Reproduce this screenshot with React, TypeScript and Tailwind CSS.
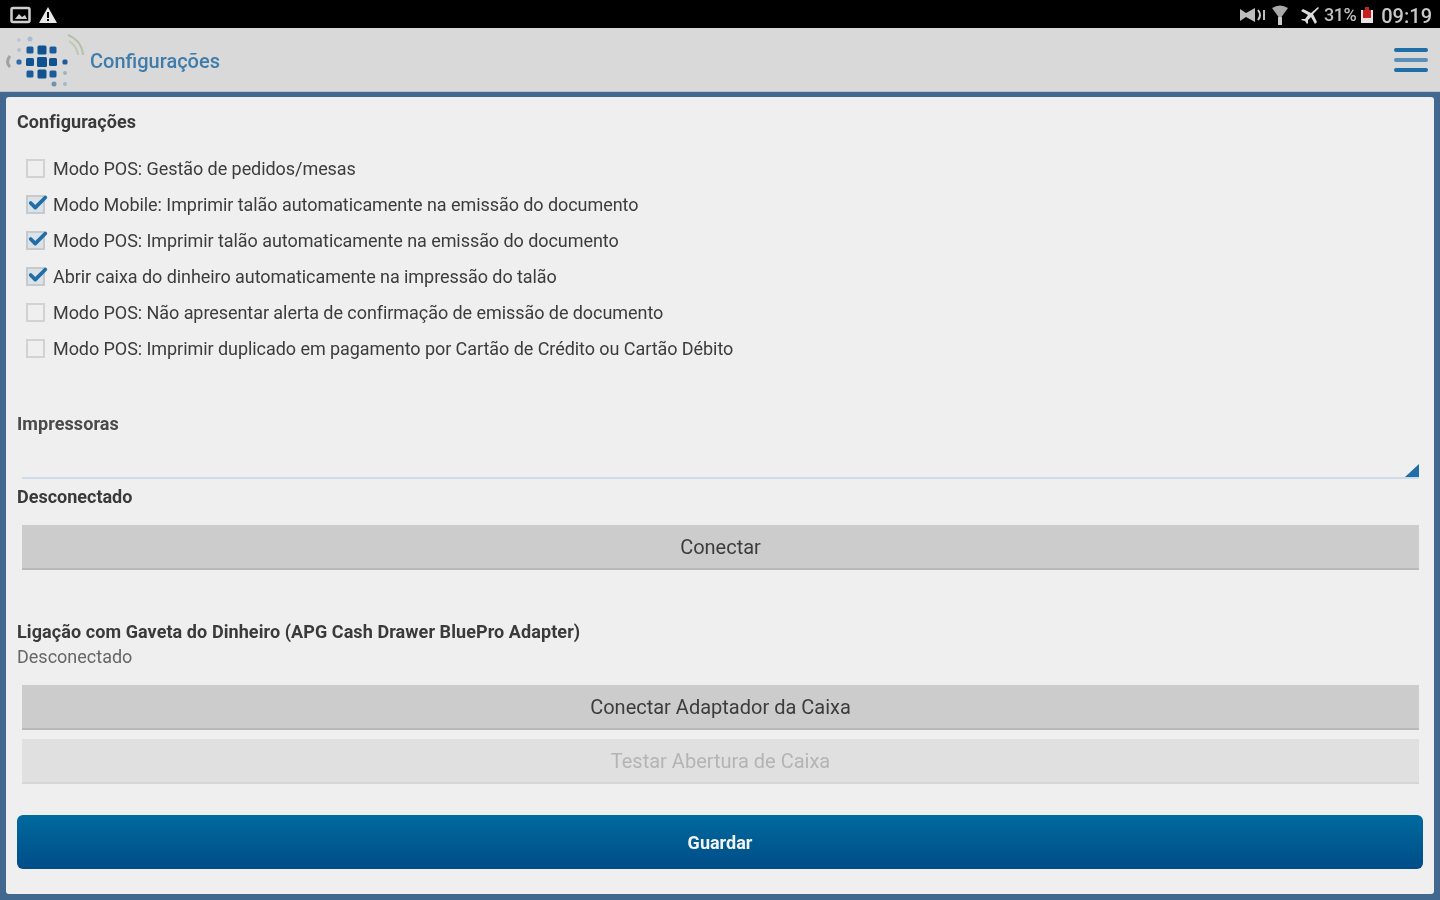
import { Check } from 'lucide-react';

const options = [
  { label: 'Modo POS: Gestão de pedidos/mesas', checked: false },
  { label: 'Modo Mobile: Imprimir talão automaticamente na emissão do documento', checked: true },
  { label: 'Modo POS: Imprimir talão automaticamente na emissão do documento', checked: true },
  { label: 'Abrir caixa do dinheiro automaticamente na impressão do talão', checked: true },
  { label: 'Modo POS: Não apresentar alerta de confirmação de emissão de documento', checked: false },
  { label: 'Modo POS: Imprimir duplicado em pagamento por Cartão de Crédito ou Cartão Débito', checked: false },
];

function Logo() {
  const dots = [
    [30, 50, 7, '#1b5b9c'], [42, 50, 9, '#0f528f'], [53, 50, 7, '#1b5b9c'],
    [19, 62, 5, '#2e6ca8'], [30, 62, 8, '#0f528f'], [42, 62, 10, '#0f528f'], [53, 62, 8, '#0f528f'], [65, 62, 5, '#1b5b9c'],
    [30, 74, 7, '#1b5b9c'], [42, 74, 9, '#0f528f'], [53, 74, 7, '#1b5b9c'],
  ] as const;
  return (
    <svg width="84" height="58" viewBox="4 31 84 58" className="shrink-0">
      {dots.map(([x, y, s, c], i) => (
        <rect key={i} x={x - s / 2} y={y - s / 2} width={s} height={s} rx="1.5" fill={c} />
      ))}
      <circle cx="19" cy="40" r="2" fill="#c0c8d0" />
      <circle cx="30" cy="39" r="2.5" fill="#a9bccd" />
      <circle cx="19" cy="50" r="2" fill="#b4c1cc" />
      <circle cx="65" cy="73" r="2" fill="#9db2c6" />
      <circle cx="54" cy="84" r="2.5" fill="#6f93b5" />
      <circle cx="65" cy="84" r="2" fill="#a5b8c8" />
      <path d="M10 56 Q5 62 10 67" fill="none" stroke="#a0a4a0" strokeWidth="3" />
      <path d="M68 35 Q82 41 83 55" fill="none" stroke="#b3c2a8" strokeWidth="2" />
      <path d="M69 41 Q77 46 78 55" fill="none" stroke="#bcc9b0" strokeWidth="2" />
    </svg>
  );
}

function StatusBar() {
  return (
    <div className="h-[28px] bg-black flex items-center justify-between pl-[10px] pr-[8px] pt-[2px] text-[#d2d2d2]">
      <div className="flex items-center gap-[6px]">
        <svg width="22" height="18" viewBox="0 0 22 18">
          <rect x="1.5" y="2" width="18" height="14" rx="1.5" fill="none" stroke="#cfcfcf" strokeWidth="2.5" />
          <path d="M5 13 L9 8 L12 11 L15 9 L17 13 Z" fill="#cfcfcf" />
        </svg>
        <svg width="20" height="18" viewBox="0 0 20 18">
          <path d="M10 1 L19 17 L1 17 Z" fill="#e8e8e8" />
          <rect x="9" y="6" width="2" height="6" fill="#000" />
          <rect x="9" y="13" width="2" height="2" fill="#000" />
        </svg>
      </div>
      <div className="flex items-center">
        <svg width="28" height="18" viewBox="0 0 28 18">
          <path d="M1 3 L7 7 L16 2 L16 16 L7 11 L1 15 Z" fill="#bdbdbd" />
          <path d="M19 4 Q23 9 19 14" fill="none" stroke="#cfcfcf" strokeWidth="2" />
          <rect x="24" y="4" width="2" height="10" fill="#bdbdbd" />
        </svg>
        <svg width="20" height="22" viewBox="0 0 20 22" className="ml-[3px]">
          <path d="M2 4 Q10 -1 18 4 L10 15 Z" fill="#a9a9a9" />
          <rect x="8" y="13" width="4" height="8" fill="#c9c9c9" />
        </svg>
        <svg width="20" height="20" viewBox="0 0 20 20" className="ml-[10px]">
          <path d="M18 2 L11 8 L3 4 L1 6 L8 10 L5 14 L2 14 L1 15 L5 16 L7 19 L8 18 L8 15 L11 12 L15 19 L17 17 L13 9 L19 3 Z" fill="#dcdcdc" />
        </svg>
        <span className="ml-[4px] text-[18px] leading-none font-medium text-[#bfbfbf] tracking-[-0.5px]">31%</span>
        <svg width="14" height="18" viewBox="0 0 14 18" className="ml-[4px]">
          <rect x="5" y="1" width="4" height="3" fill="#b52a2a" />
          <rect x="1" y="4" width="12" height="13" fill="#e5e5e5" />
          <rect x="3" y="4" width="8" height="8" fill="#c81e1e" />
        </svg>
        <span className="ml-[7px] mt-[2px] text-[20px] leading-none font-medium text-[#c9c9c9]">09:19</span>
      </div>
    </div>
  );
}

function GrayButton({ label, disabled }: { label: string; disabled?: boolean }) {
  return (
    <button
      className={
        'mx-[16px] w-[1397px] h-[45px] flex items-center justify-center text-[20px] border-b-2 ' +
        (disabled
          ? 'bg-[#e0e0e0] border-[#d6d6d6] text-[#b4b4b4]'
          : 'bg-[#cccccc] border-[#b9b9b9] text-[#3c3c3c]')
      }
    >
      {label}
    </button>
  );
}

export default function App() {
  return (
    <div className="w-[1440px] h-[900px] overflow-hidden bg-[#43688f] font-['Roboto',sans-serif] blur-[0.7px]">
      <StatusBar />

      <header className="h-[64px] bg-[#d9d9d9] border-b border-[#b9c3cc] flex items-center justify-between pl-[4px] pr-[12px]">
        <div className="flex items-center">
          <Logo />
          <span className="ml-[2px] mt-[2px] text-[20px] font-medium text-[#3f7cab]">Configurações</span>
        </div>
        <div className="flex flex-col gap-[6px]">
          <span className="w-[34px] h-[4px] rounded-full bg-[#1f6ea8]" />
          <span className="w-[34px] h-[4px] rounded-full bg-[#5a8fb8]" />
          <span className="w-[34px] h-[4px] rounded-full bg-[#1f6ea8]" />
        </div>
      </header>

      <main className="mx-[6px] mt-[5px] h-[797px] bg-[#efefef] rounded-[3px] pt-[13px] flex flex-col">
        <h2 className="ml-[11px] text-[18px] leading-[24px] font-bold tracking-[0.08px] text-[#3a3a3a]">Configurações</h2>

        <div className="mt-[16px] flex flex-col">
          {options.map(o => (
            <label key={o.label} className="h-[36px] flex items-center pl-[20px]">
              <span
                className={
                  'relative w-[19px] h-[19px] shrink-0 border-2 ' +
                  (o.checked ? 'border-[#c6cacd] bg-[#dbe2e8]' : 'border-[#d2d2d2] bg-[#efefef]')
                }
              >
                {o.checked && <Check className="absolute -top-[5px] -left-[1px] w-[22px] h-[22px] text-[#1f6ea8]" strokeWidth={4} />}
              </span>
              <span className="ml-[8px] text-[18px] tracking-[-0.06px] text-[#3c3c3c]">{o.label}</span>
            </label>
          ))}
        </div>

        <h2 className="ml-[11px] mt-[46px] text-[18px] leading-[24px] font-bold tracking-[0.08px] text-[#4a4a4a]">Impressoras</h2>

        <div className="relative mx-[16px] mt-[17px] w-[1397px] h-[26px] border-b-2 border-[#cfdbe6]">
          <svg width="14" height="13" viewBox="0 0 14 13" className="absolute right-0 bottom-0">
            <path d="M14 0 V13 H0 Z" fill="#1f6ea8" />
          </svg>
        </div>

        <div className="ml-[11px] mt-[6px] text-[18px] leading-[24px] font-bold text-[#3a3a3a]">Desconectado</div>

        <div className="mt-[16px]">
          <GrayButton label="Conectar" />
        </div>

        <div className="ml-[11px] mt-[50px] text-[18px] leading-[24px] font-bold tracking-[0.08px] text-[#3a3a3a]">
          Ligação com Gaveta do Dinheiro (APG Cash Drawer BluePro Adapter)
        </div>
        <div className="ml-[11px] mt-[1px] text-[18px] leading-[24px] text-[#666]">Desconectado</div>

        <div className="mt-[16px] flex flex-col gap-[9px]">
          <GrayButton label="Conectar Adaptador da Caixa" />
          <GrayButton label="Testar Abertura de Caixa" disabled />
        </div>

        <button className="mx-[11px] mt-[31px] w-[1406px] h-[54px] rounded-[6px] bg-gradient-to-b from-[#006a9e] to-[#004d88] text-[#f2f2f2] text-[18px] font-bold">
          Guardar
        </button>
      </main>
    </div>
  );
}
